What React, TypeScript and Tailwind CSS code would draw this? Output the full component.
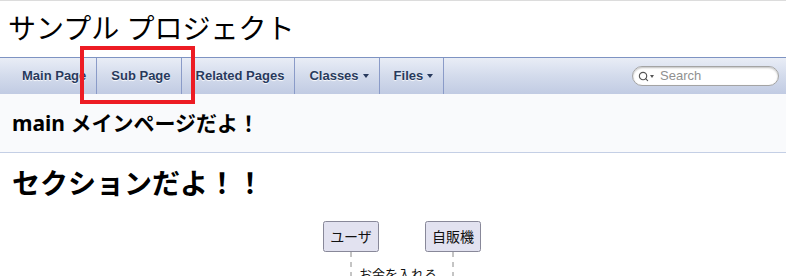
import { Search } from 'lucide-react';

const navItems = [
  { label: 'Main Page' },
  { label: 'Sub Page' },
  { label: 'Related Pages' },
  { label: 'Classes', menu: true },
  { label: 'Files', menu: true },
];

function SequenceDiagram() {
  return (
    <svg width="220" height="60" viewBox="0 0 220 60" className="block">
      {/* lifelines */}
      <line x1="69" y1="32" x2="69" y2="60" stroke="#8a8a8a" strokeDasharray="5 5" />
      <line x1="171" y1="32" x2="171" y2="60" stroke="#8a8a8a" strokeDasharray="5 5" />
      {/* participants */}
      <rect x="41.5" y="1.5" width="55" height="30" rx="2" fill="#e2e2f0" stroke="#888899" />
      <rect x="143.5" y="1.5" width="55" height="30" rx="2" fill="#e2e2f0" stroke="#888899" />
      <text x="69" y="22" textAnchor="middle" fontSize="14" fill="#111" fontFamily='"Noto Sans CJK JP", sans-serif'>
        ユーザ
      </text>
      <text x="171" y="22" textAnchor="middle" fontSize="14" fill="#111" fontFamily='"Noto Sans CJK JP", sans-serif'>
        自販機
      </text>
      <text x="77" y="59" fontSize="13" fill="#111" fontFamily='"Noto Sans CJK JP", sans-serif'>
        お金を入れる
      </text>
    </svg>
  );
}

export default function App() {
  return (
    <div className="relative w-[786px] h-[276px] overflow-hidden bg-white font-['Noto_Sans','Noto_Sans_CJK_JP',sans-serif]">
      {/* Project title */}
      <div className="border-t border-[#dcdcdc] h-[57px] pl-2 flex items-center">
        <div className="text-[28px] leading-none text-black pb-[2px]">サンプル プロジェクト</div>
      </div>

      {/* Nav bar */}
      <div className="h-[37px] border-t border-[#7e93c2] bg-gradient-to-b from-[#e9edf6] via-[#d3dbec] to-[#c1cbe3] flex items-stretch pl-2">
        {navItems.map((item) => (
          <div
            key={item.label}
            className="flex items-center pl-[14px] pr-[10px] border-r border-[#8a9bc8] text-[13px] font-bold text-[#283a5d] font-['Liberation_Sans',Arial,sans-serif] [text-shadow:0_1px_1px_rgba(255,255,255,0.9)]"
          >
            {item.label}
            {item.menu && (
              <span className="ml-[4px] inline-block w-0 h-0 border-l-[3.5px] border-r-[3.5px] border-t-[4px] border-l-transparent border-r-transparent border-t-[#283a5d]" />
            )}
          </div>
        ))}
        <div className="flex-1" />
        <div className="self-center mr-[7px] w-[147px] h-[20px] rounded-full bg-white border border-[#a4a4a4] shadow-[inset_0_1px_2px_rgba(0,0,0,0.25)] flex items-center pl-[5px]">
          <Search className="w-[11px] h-[11px] text-[#555]" strokeWidth={2.5} />
          <span className="ml-[1px] w-0 h-0 border-l-[2.5px] border-r-[2.5px] border-t-[3px] border-l-transparent border-r-transparent border-t-[#555]" />
          <span className="ml-[6px] text-[13px] text-[#909090] font-['Liberation_Sans',Arial,sans-serif]">Search</span>
        </div>
      </div>

      {/* Page header */}
      <div className="h-[59px] bg-[#f9fafc] border-b border-[#c4cfe5] pl-3 flex items-center">
        <div className="text-[21px] font-bold leading-none text-black">main メインページだよ！</div>
      </div>

      {/* Contents */}
      <div className="pl-3 pt-[12px]">
        <h1 className="text-[28px] font-bold leading-[36px] text-black">セクションだよ！！</h1>
      </div>
      <div className="flex justify-center mt-[19px] pr-[3px]">
        <SequenceDiagram />
      </div>

      {/* Annotation highlight */}
      <div className="absolute left-[80px] top-[46px] w-[115px] h-[58px] border-4 border-[#ed1c24]" />
    </div>
  );
}
